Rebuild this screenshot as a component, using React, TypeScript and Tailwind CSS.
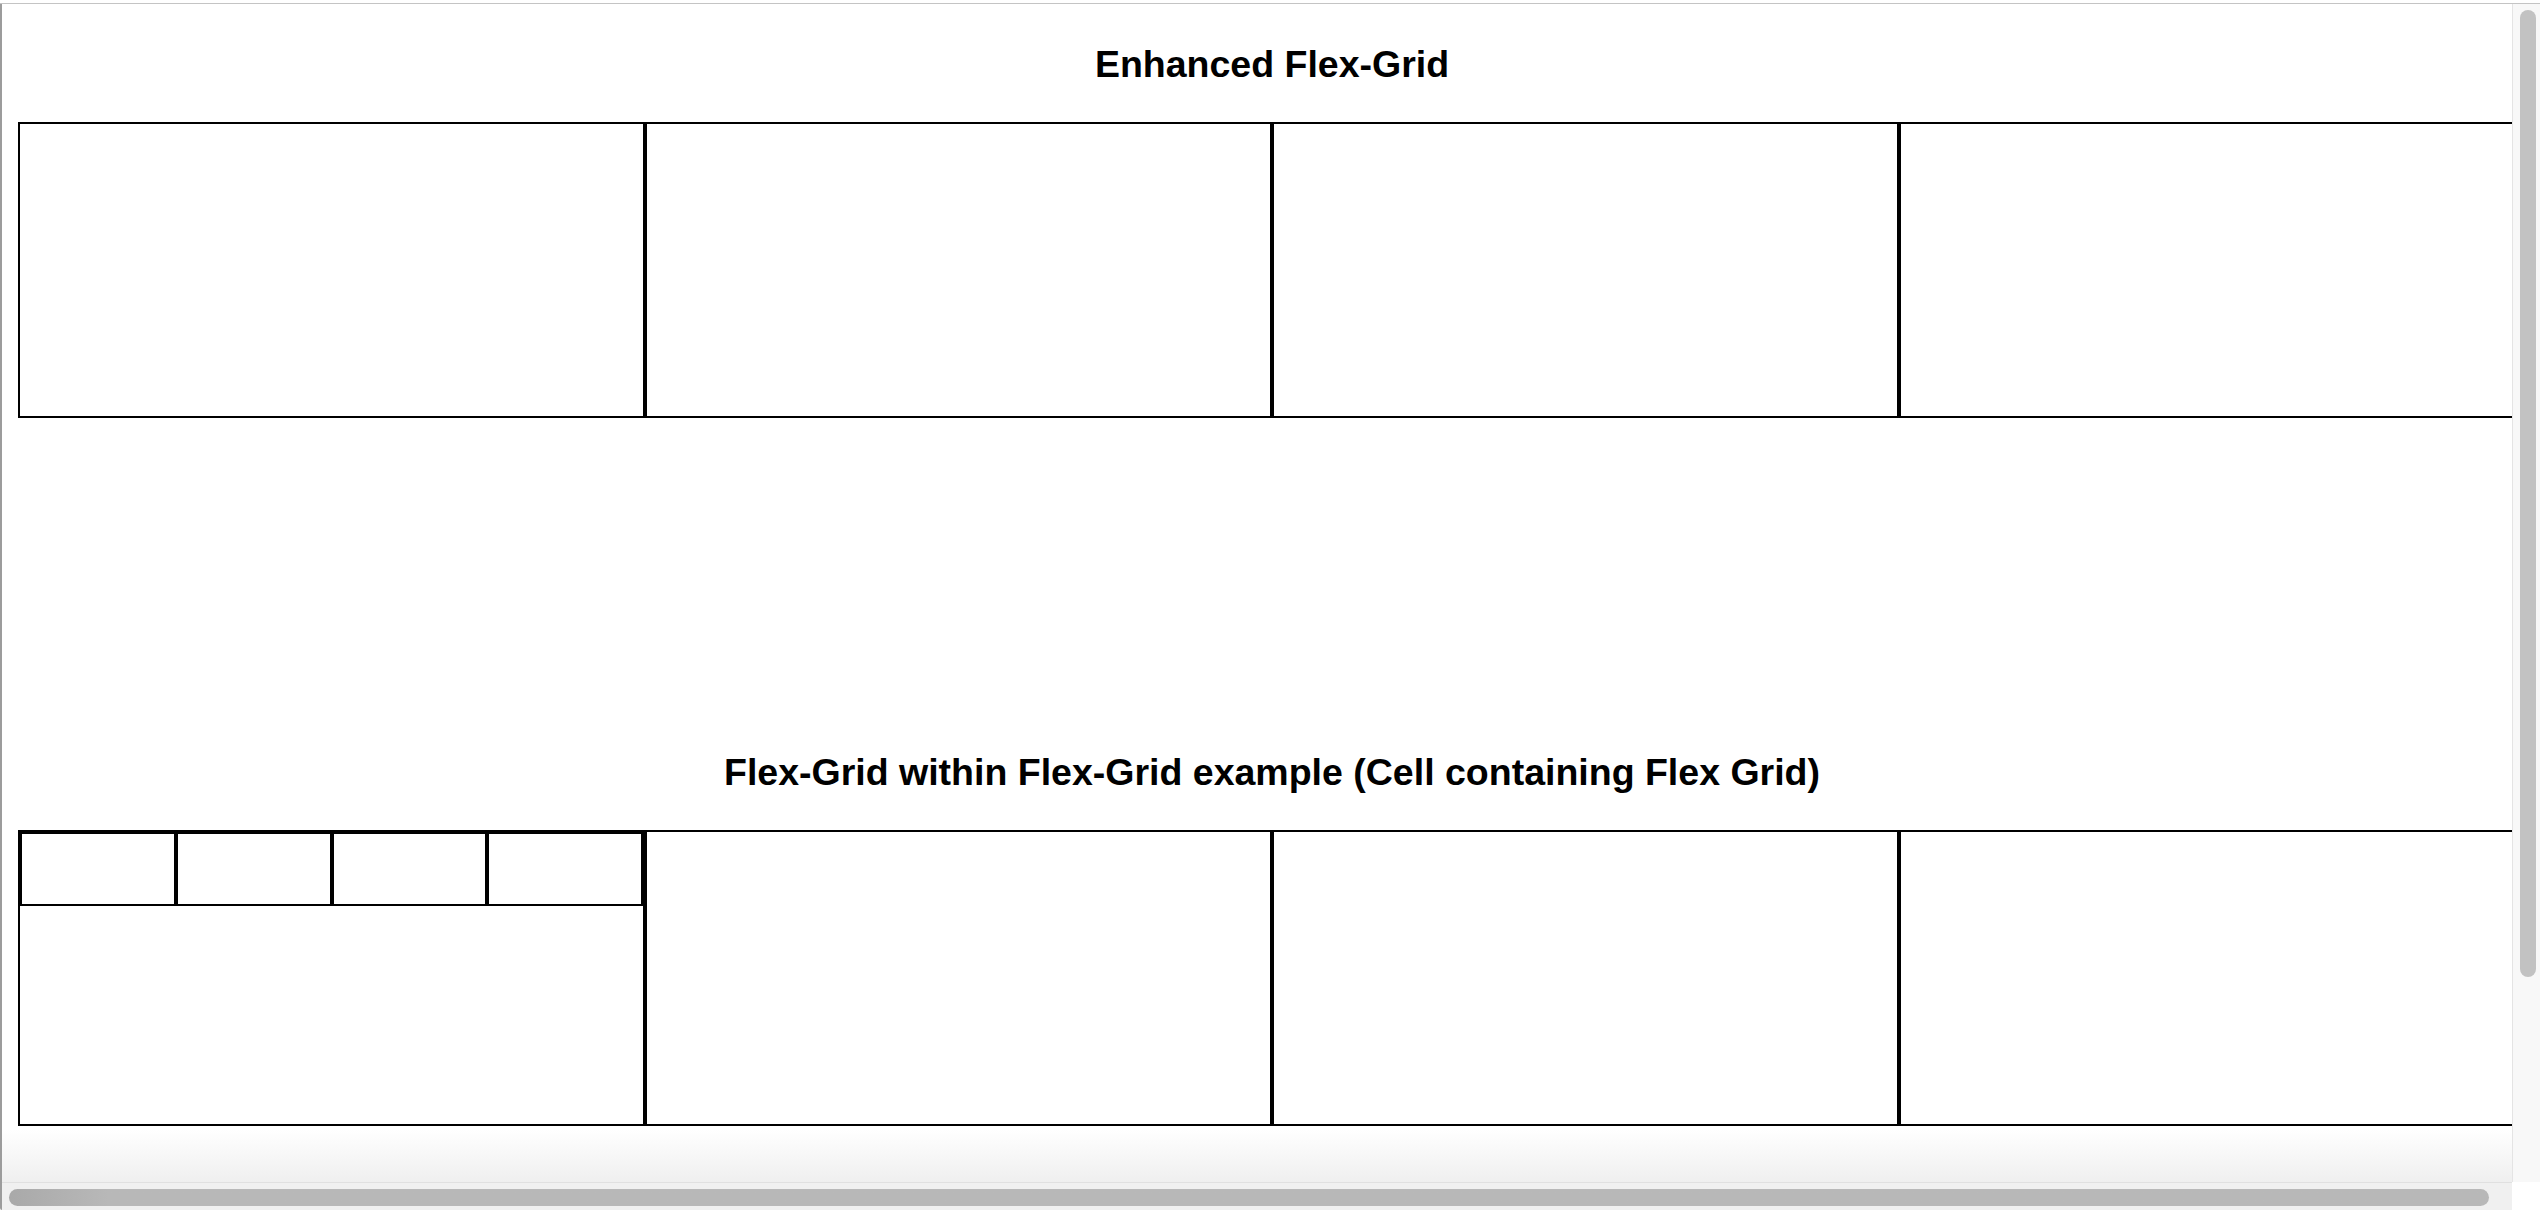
import React from "react";

const cells = [0, 1, 2, 3];

function Cell({ children }: { children?: React.ReactNode }) {
  return (
    <div className="w-[627px] h-[296px] shrink-0 border-2 border-black box-border">
      {children}
    </div>
  );
}

function FlexGrid({ nested = false }: { nested?: boolean }) {
  return (
    <div className="flex">
      {cells.map((i) => (
        <Cell key={i}>
          {nested && i === 0 && (
            <div className="flex">
              {cells.map((j) => (
                <div key={j} className="flex-1 h-[74px] border-2 border-black box-border" />
              ))}
            </div>
          )}
        </Cell>
      ))}
    </div>
  );
}

function Title({ children }: { children: React.ReactNode }) {
  return (
    <h2 className="text-center text-[37.5px] leading-[42px] font-bold text-black whitespace-nowrap">
      {children}
    </h2>
  );
}

export default function App() {
  return (
    <div
      className="w-[2540px] h-[1210px] overflow-hidden flex flex-col bg-white"
      style={{ fontFamily: '"Liberation Sans", Arial, sans-serif' }}
    >
      <div className="h-[3px] bg-white" />
      <div className="h-px bg-[#c4c4c4]" />
      <div className="flex flex-1 min-h-0">
        <div className="w-[2px] bg-[#9c9c9c] rounded-bl-[3px]" />
        <div className="flex-1 flex flex-col min-w-0">
          <div className="flex flex-1 min-h-0">
            <div className="flex-1 relative overflow-hidden">
              <div className="w-[2540px] px-4 pt-[39px]">
                <Title>Enhanced Flex-Grid</Title>
                <div className="mt-[37px]">
                  <FlexGrid />
                </div>
                <div className="mt-[333px]">
                  <Title>Flex-Grid within Flex-Grid example (Cell containing Flex Grid)</Title>
                </div>
                <div className="mt-[37px]">
                  <FlexGrid nested />
                </div>
              </div>
              <div className="absolute left-0 right-0 bottom-0 h-[52px] bg-gradient-to-b from-white/0 to-[#efefef] pointer-events-none" />
            </div>
            {/* vertical scrollbar */}
            <div className="w-[28px] shrink-0 border-l border-[#e4e4e4] bg-[#f8f8f8] pl-[7px] pt-[6px]">
              <div className="w-[16px] h-[967px] rounded-full bg-[#c2c2c2]" />
            </div>
          </div>
          {/* horizontal scrollbar */}
          <div className="h-[28px] shrink-0 flex">
            <div className="flex-1 border-t border-[#e0e0e0] bg-[#f0f0f0] pt-[6px] pl-[7px]">
              <div className="w-[2480px] h-[17px] rounded-full bg-gradient-to-r from-[#a9a9a9] via-[#b8b8b8] via-[4%] to-[#b8b8b8]" />
            </div>
            <div className="w-[28px] bg-white" />
          </div>
        </div>
      </div>
    </div>
  );
}
